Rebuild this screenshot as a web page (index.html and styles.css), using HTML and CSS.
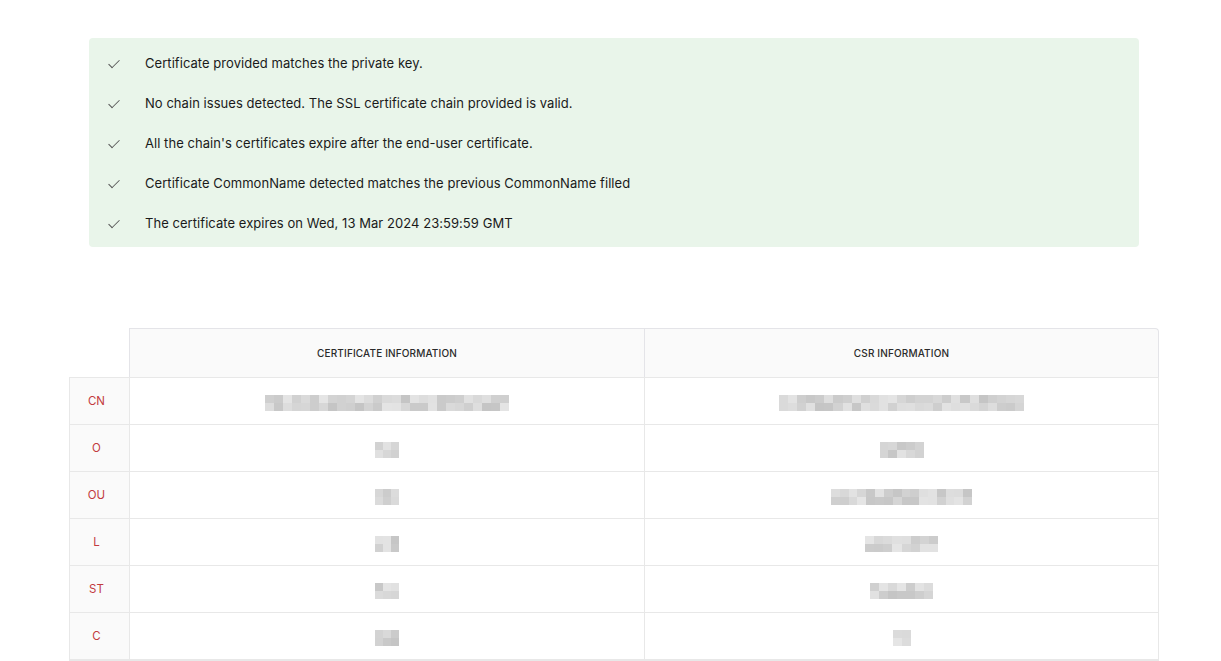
FILE: index.html
```html
<!doctype html>
<html lang="en">
<head>
  <meta charset="UTF-8">
  <meta name="viewport" content="width=device-width, initial-scale=1.0">
  <title>SSL Certificate Checker</title>
  <link rel="stylesheet" href="styles.css">
</head>
<body>
  <main class="page">
    <ul class="checks">
      <li><span class="tick"></span>Certificate provided matches the private key.</li>
      <li><span class="tick"></span>No chain issues detected. The SSL certificate chain provided is valid.</li>
      <li><span class="tick"></span>All the chain's certificates expire after the end-user certificate.</li>
      <li><span class="tick"></span>Certificate CommonName detected matches the previous CommonName filled</li>
      <li><span class="tick"></span>The certificate expires on Wed, 13 Mar 2024 23:59:59 GMT</li>
    </ul>

    <table class="compare">
      <thead>
        <tr>
          <th class="corner"></th>
          <th>Certificate information</th>
          <th class="last">CSR information</th>
        </tr>
      </thead>
      <tbody>
        <tr><td class="key">CN</td><td><span class="redacted" data-w="245" data-seed="3"></span></td><td><span class="redacted" data-w="245" data-seed="11"></span></td></tr>
        <tr><td class="key">O</td><td><span class="redacted" data-w="25" data-seed="5"></span></td><td><span class="redacted" data-w="44" data-seed="7"></span></td></tr>
        <tr><td class="key">OU</td><td><span class="redacted" data-w="25" data-seed="9"></span></td><td><span class="redacted" data-w="141" data-seed="13"></span></td></tr>
        <tr><td class="key">L</td><td><span class="redacted" data-w="25" data-seed="17"></span></td><td><span class="redacted" data-w="73" data-seed="19"></span></td></tr>
        <tr><td class="key">ST</td><td><span class="redacted" data-w="25" data-seed="23"></span></td><td><span class="redacted" data-w="63" data-seed="29"></span></td></tr>
        <tr><td class="key">C</td><td><span class="redacted" data-w="25" data-seed="31"></span></td><td><span class="redacted" data-w="18" data-seed="37"></span></td></tr>
      </tbody>
    </table>
  </main>

  <script>
    // fake pixelated blur for hidden values
    document.querySelectorAll('.redacted').forEach(el => {
      const w = +el.dataset.w;
      let s = +el.dataset.seed;
      const rnd = () => { s = (s * 9301 + 49297) % 233280; return s / 233280; };
      const cols = Math.max(2, Math.round(w / 9));
      el.style.width = w + 'px';
      el.style.gridTemplateColumns = `repeat(${cols}, 1fr)`;
      for (let i = 0; i < cols * 2; i++) {
        const c = document.createElement('i');
        const g = Math.round(196 + rnd() * 34);
        c.style.background = `rgb(${g},${g},${g})`;
        el.appendChild(c);
      }
    });
  </script>
</body>
</html>
```

FILE: styles.css
```css
body { margin: 0; background: #fff; font-family: Inter, "Noto Sans", sans-serif; color: #222; }
.page { width: 1090px; margin-left: 69px; padding-top: 38px; }

.checks { list-style: none; margin: 0 20px; padding: 5px 0 4px; background: #e9f5ea; border-radius: 4px; }
.checks li { display: flex; align-items: center; height: 40px; font-size: 13px; letter-spacing: .05px; color: #1a1a1a; }
.tick { width: 13px; height: 13px; margin: 0 24px 0 19px; position: relative; flex: none; }
.tick::after { content: ""; position: absolute; left: 3px; top: 0; width: 5px; height: 10px; border-right: 1px solid #555; border-bottom: 1px solid #555; transform: rotate(45deg) scaleX(.9); }

.compare { width: 100%; margin-top: 81px; border-collapse: separate; border-spacing: 0; table-layout: fixed; }
.compare th, .compare td { padding: 0; text-align: center; vertical-align: middle; }
.compare th { height: 48px; background: #fafafa; font-size: 10px; font-weight: 500; text-transform: uppercase; letter-spacing: .15px; color: #2a2a2a; border-top: 1px solid #e4e4e8; border-left: 1px solid #e4e4e8; }
.compare th.corner { width: 60px; background: #fff; border: none; }
.compare th.last { border-right: 1px solid #e4e4e8; border-top-right-radius: 4px; }
.compare td { height: 46px; border-top: 1px solid #e8e8e8; border-left: 1px solid #e8e8e8; background: #fff; }
.compare td:last-child { border-right: 1px solid #e8e8e8; }
.compare tbody tr:last-child td { border-bottom: 2px solid #e8e8e8; }
.compare td.key { padding-right: 6px; background: #fafafa; color: #c23b3e; font-size: 11.5px; }

.redacted { display: inline-grid; grid-template-rows: 8px 8px; height: 16px; vertical-align: middle; }
.redacted i { display: block; }
```
